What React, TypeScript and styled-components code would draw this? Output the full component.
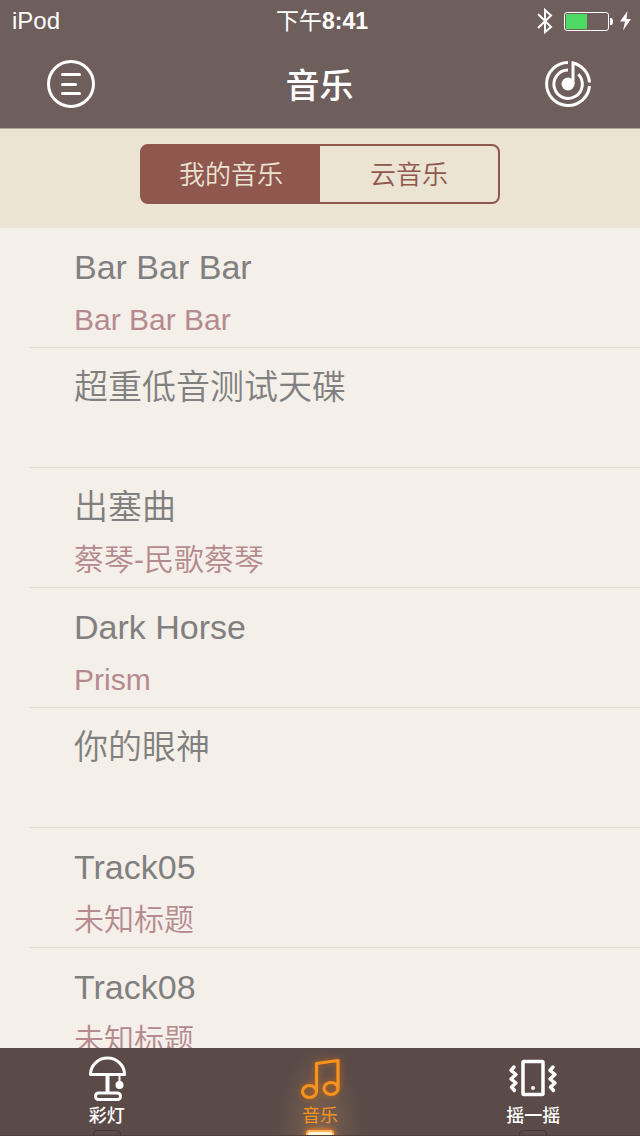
import React, { useState } from 'react';
import styled, { createGlobalStyle } from 'styled-components';

const GlobalStyle = createGlobalStyle`
  * { box-sizing: border-box; }
  body {
    margin: 0;
    background: #f4efe8;
    font-family: "Liberation Sans", "Noto Sans CJK SC", sans-serif;
  }
  button { font: inherit; border: 0; padding: 0; background: none; cursor: pointer; }
`;

const Screen = styled.div`
  display: flex;
  flex-direction: column;
  height: 100vh;
  overflow: hidden;
`;

const Header = styled.header`
  flex: none;
  background: #6e5f5c;
  color: #fff;
`;

const StatusBar = styled.div`
  display: grid;
  grid-template-columns: 1fr auto 1fr;
  align-items: center;
  height: 40px;
  padding: 0 8px 0 12px;
  font-size: 24px;
  line-height: 42px;
`;

const Clock = styled.time`
  font-size: 23px;
  font-weight: 400;
`;

const ClockDigits = styled.span`
  font-weight: 700;
`;

const StatusIcons = styled.div`
  display: flex;
  justify-content: flex-end;
  align-items: center;
`;

const NavBar = styled.div`
  display: flex;
  align-items: center;
  justify-content: space-between;
  height: 88px;
  padding: 0 45px 0 44px;
`;

const NavButton = styled.button`
  display: flex;
  align-items: center;
  justify-content: center;
  width: 54px;
  height: 54px;
  color: #fff;
`;

const NavTitle = styled.h1`
  margin: 0;
  padding-top: 4px;
  font-size: 34px;
  font-weight: 500;
  line-height: 48px;
`;

const FilterBar = styled.div`
  flex: none;
  display: flex;
  justify-content: center;
  height: 100px;
  padding: 15px 20px 0;
  border-top: 1px solid #b0a597;
  background: #ebe4d2;
`;

const Segmented = styled.div`
  display: grid;
  grid-template-columns: 1fr 1fr;
  width: 100%;
  max-width: 360px;
  height: 60px;
  border: 2px solid #90574f;
  border-radius: 8px;
  background: #90574f;
  overflow: hidden;
`;

const Segment = styled.button<{ $active: boolean }>`
  background: ${(p) => (p.$active ? '#90574f' : '#ebe4d2')};
  color: ${(p) => (p.$active ? '#ebe4d2' : '#90574f')};
  height: 56px;
  padding-top: 2px;
  font-size: 26px;
  font-weight: 350;
  line-height: 54px;
`;

const TrackList = styled.ul`
  flex: 1;
  min-height: 0;
  margin: 0;
  padding: 0 0 0 30px;
  overflow: hidden;
  list-style: none;
`;

const TrackRow = styled.li`
  height: 120px;
  padding: 14px 20px 0 44px;
  border-bottom: 1px solid #dfdacb;
  font-weight: 350;
`;

const TrackTitle = styled.div`
  height: 52px;
  font-size: 34px;
  line-height: 51px;
  color: #808080;
`;

const TrackAlbum = styled.div`
  font-size: 30px;
  line-height: 52px;
  color: #b48a8f;
`;

const TabBar = styled.nav`
  flex: none;
  display: grid;
  grid-template-columns: repeat(3, 1fr);
  height: 88px;
  background: #5b4b48;
  border-bottom: 1px solid #4e3f3d;
`;

const Tab = styled.button<{ $active: boolean }>`
  display: flex;
  flex-direction: column;
  align-items: center;
  height: 87px;
  padding-top: 6px;
  overflow: hidden;
  color: ${(p) => (p.$active ? '#f7931d' : '#fff')};
  background: ${(p) =>
    p.$active
      ? 'radial-gradient(ellipse 42px 88px at 50% 100%, rgba(170, 130, 90, 0.5), rgba(140, 110, 85, 0.25) 60%, transparent)'
      : 'none'};
`;

const TabIcon = styled.svg<{ $active: boolean }>`
  flex: none;
  filter: ${(p) => (p.$active ? 'drop-shadow(0 0 3px rgba(230, 110, 10, 0.7))' : 'none')};
`;

const TabLabel = styled.span<{ $active: boolean }>`
  flex: none;
  height: 28px;
  font-size: 18px;
  font-weight: ${(p) => (p.$active ? 400 : 500)};
  line-height: 28px;
`;

const TabLamp = styled.span<{ $active: boolean }>`
  flex: none;
  width: 28px;
  height: 12px;
  border: ${(p) => (p.$active ? '2px solid #ffb060' : '1px solid #453734')};
  border-radius: 4px;
  background: ${(p) => (p.$active ? '#fff3dc' : '#5b4b48')};
  box-shadow: ${(p) => (p.$active ? '0 0 4px 1px #ef7a14' : 'none')};
`;

const tracks = [
  { title: 'Bar Bar Bar', album: 'Bar Bar Bar' },
  { title: '超重低音测试天碟', album: '' },
  { title: '出塞曲', album: '蔡琴-民歌蔡琴' },
  { title: 'Dark Horse', album: 'Prism' },
  { title: '你的眼神', album: '' },
  { title: 'Track05', album: '未知标题' },
  { title: 'Track08', album: '未知标题' },
];

const LampDrawing = () => (
  <g fill="none" stroke="currentColor" strokeWidth="3">
    <path d="M15.500 20.500a17 16.500 0 0 1 34 0z" strokeLinejoin="round" />
    <path d="M32.500 21v18" strokeWidth="4" />
    <path d="M44.500 21v8" strokeWidth="2" />
    <circle cx="44.500" cy="31" r="4" fill="currentColor" stroke="none" />
    <rect x="20.500" y="39" width="25" height="6.500" rx="3" />
  </g>
);

const NoteDrawing = () => (
  <g fill="none" stroke="currentColor" strokeWidth="3.200" strokeLinejoin="round">
    <path d="M28.500 37V9.500L50 6.500v28" />
    <ellipse cx="21.500" cy="37.500" rx="7" ry="6" />
    <ellipse cx="43" cy="34.500" rx="7" ry="6" />
  </g>
);

const ShakeDrawing = () => (
  <g fill="none" stroke="currentColor" strokeWidth="3.500" strokeLinejoin="round" strokeLinecap="round">
    <rect x="22" y="7.500" width="20" height="33" rx="1" />
    <circle cx="32" cy="34" r="2" fill="currentColor" stroke="none" />
    <path d="M13 13l-3 3.500 5 4-5 4.500 5 4-4.500 4 3 3.500" />
    <path d="M52 13l-3 3.500 5 4-5 4.500 5 4-4.500 4 3 3.500" />
  </g>
);

const tabs = [
  { label: '彩灯', Drawing: LampDrawing },
  { label: '音乐', Drawing: NoteDrawing },
  { label: '摇一摇', Drawing: ShakeDrawing },
];

const BluetoothIcon = () => (
  <svg width="18" height="28" viewBox="0 0 18 28" fill="none" stroke="#fff" strokeWidth="2">
    <path d="M2 7l13 13-6 5V3l6 5.500L2 21" />
  </svg>
);

const BatteryIcon = () => (
  <svg width="66" height="28" viewBox="0 0 66 28">
    <rect x="10.500" y="5.500" width="44" height="18" rx="2.500" fill="none" stroke="#fff" />
    <rect x="12" y="7" width="21" height="15" fill="#4cd964" />
    <path d="M56 11h1q2 0 2 3.500t-2 3.500h-1z" fill="#fff" />
  </svg>
);

const BoltIcon = () => (
  <svg width="12" height="28" viewBox="0 0 12 28">
    <path d="M7.500 4L0 14.500h5L3 23.500 11 12H6.500z" fill="#fff" />
  </svg>
);

const MenuIcon = () => (
  <svg width="50" height="50" viewBox="0 0 50 50" fill="none" stroke="currentColor" strokeWidth="3">
    <circle cx="25" cy="25" r="22.500" />
    <path d="M16.500 15.500h17M16.500 25.500h13M16.500 34.500h17" strokeLinecap="round" />
  </svg>
);

const PlayingIcon = () => (
  <svg width="50" height="50" viewBox="0 0 50 50" fill="none" stroke="currentColor" strokeWidth="3">
    <path d="M25 3.500A21.500 21.500 0 1 0 46.500 27" />
    <path d="M46.500 23.500A21.500 21.500 0 0 0 30 4V25" />
    <path d="M25 11A14.200 14.200 0 1 0 35.300 15.300" />
    <circle cx="25" cy="25" r="6.500" fill="currentColor" stroke="none" />
  </svg>
);

export default function App() {
  const [segment, setSegment] = useState(0);
  const [tab, setTab] = useState(1);

  return (
    <Screen>
      <GlobalStyle />
      <Header>
        <StatusBar>
          <span>iPod</span>
          <Clock>
            下午<ClockDigits>8:41</ClockDigits>
          </Clock>
          <StatusIcons>
            <BluetoothIcon />
            <BatteryIcon />
            <BoltIcon />
          </StatusIcons>
        </StatusBar>
        <NavBar>
          <NavButton aria-label="菜单">
            <MenuIcon />
          </NavButton>
          <NavTitle>音乐</NavTitle>
          <NavButton aria-label="正在播放">
            <PlayingIcon />
          </NavButton>
        </NavBar>
      </Header>
      <FilterBar>
        <Segmented>
          {['我的音乐', '云音乐'].map((label, i) => (
            <Segment key={label} $active={segment === i} aria-pressed={segment === i} onClick={() => setSegment(i)}>
              {label}
            </Segment>
          ))}
        </Segmented>
      </FilterBar>
      <TrackList>
        {tracks.map((t) => (
          <TrackRow key={t.title}>
            <TrackTitle>{t.title}</TrackTitle>
            {t.album && <TrackAlbum>{t.album}</TrackAlbum>}
          </TrackRow>
        ))}
      </TrackList>
      <TabBar>
        {tabs.map(({ label, Drawing }, i) => (
          <Tab key={label} $active={tab === i} onClick={() => setTab(i)}>
            <TabIcon $active={tab === i} width="64" height="48" viewBox="0 0 64 48">
              <Drawing />
            </TabIcon>
            <TabLabel $active={tab === i}>{label}</TabLabel>
            <TabLamp $active={tab === i} />
          </Tab>
        ))}
      </TabBar>
    </Screen>
  );
}
